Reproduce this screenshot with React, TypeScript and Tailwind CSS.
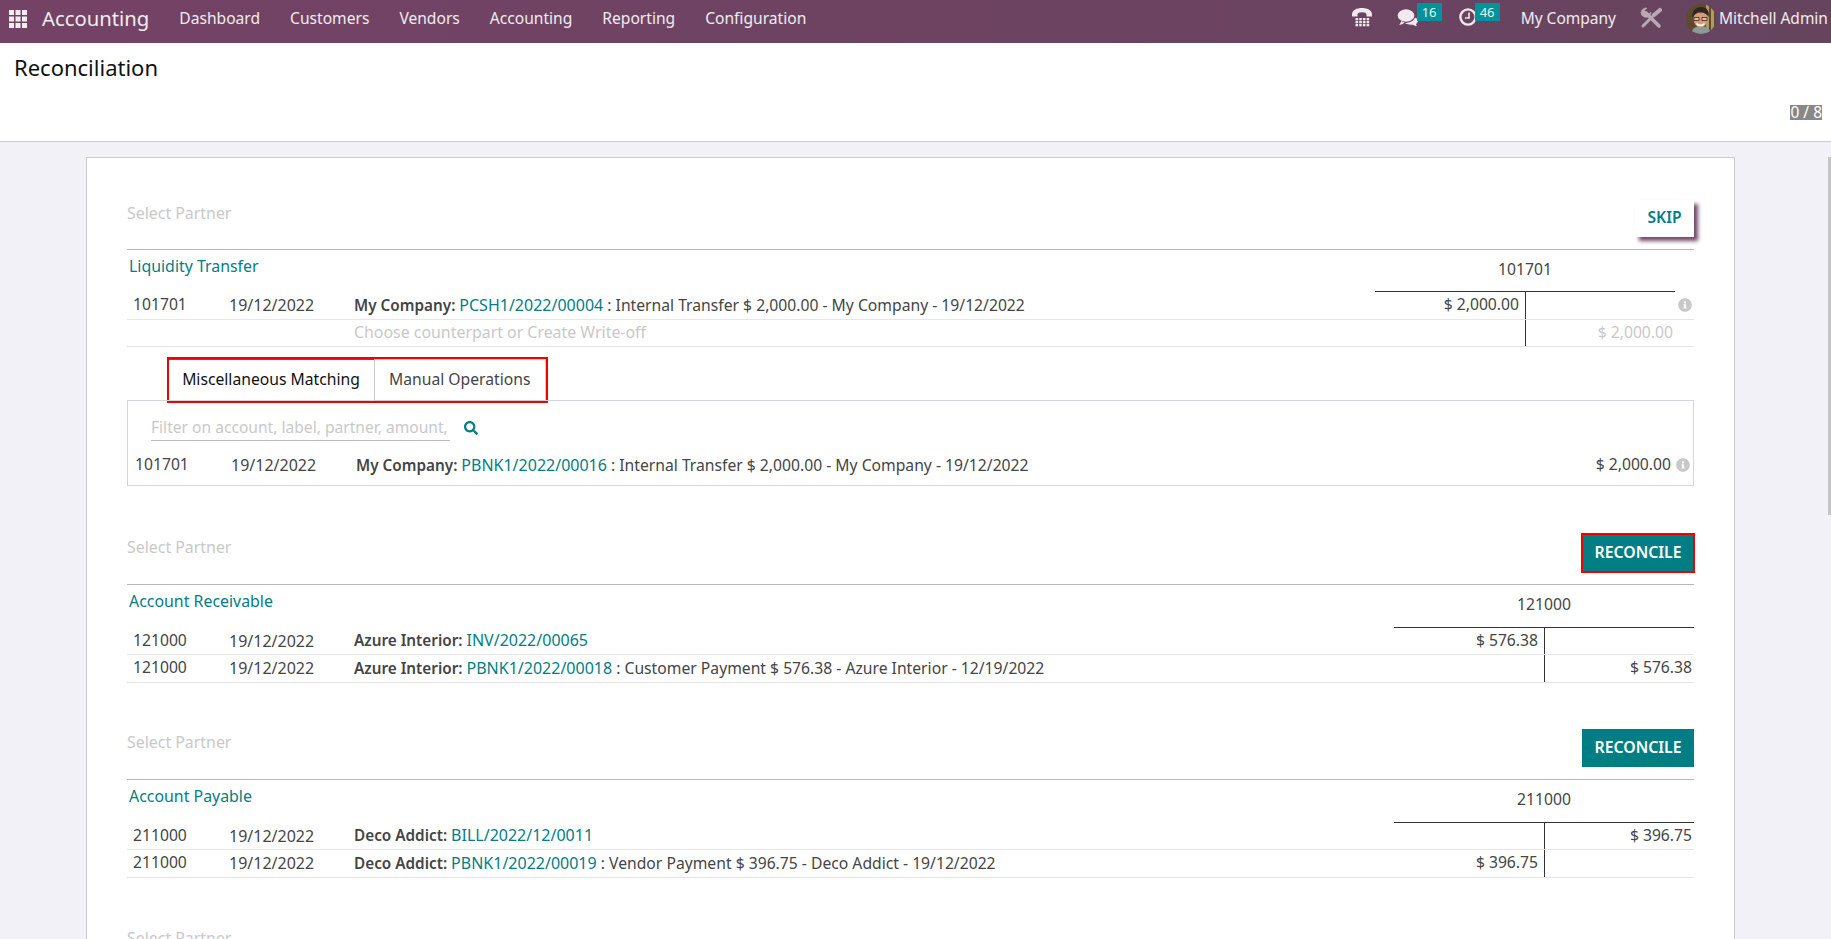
import { FaInfoCircle, FaSearch } from 'react-icons/fa';

const teal = 'text-[#017e84]';

function AppsIcon() {
  return (
    <svg width="18" height="18" viewBox="0 0 18 18" className="fill-[#f4eef2]">
      {[0, 6.5, 13].map((y) =>
        [0, 6.5, 13].map((x) => <rect key={`${x}-${y}`} x={x} y={y} width="5" height="5" />),
      )}
    </svg>
  );
}

function PhoneIcon() {
  return (
    <svg width="20" height="20" viewBox="0 0 20 20" className="fill-[#f1e9ef]">
      <path d="M0 7.500C0 3 5 1 10 1s10 2 10 6.500V9.500h-5.500V7.200C14.500 6 12.500 5.200 10 5.200S5.500 6 5.500 7.200V9.500H0z" />
      {[11, 14, 17].map((y) =>
        [3.500, 7.200, 10.900, 14.600].map((x) => <rect key={`${x}-${y}`} x={x} y={y} width="2.600" height="2.300" />),
      )}
    </svg>
  );
}

function CommentsIcon() {
  return (
    <svg width="21" height="18" viewBox="0 0 21 18" className="fill-[#f1e9ef]">
      <path d="M7 14c1-3 4-5 7-5 4 0 7 1 7 4 0 1-.8 2-2 3 0 .8.4 1.400 1 2-1.500 0-3-.5-4-1.300-4 .3-7.500-.7-9-2.700z" />
      <ellipse cx="9" cy="7.500" rx="9" ry="6.800" stroke="#67445f" strokeWidth="1.200" />
      <path d="M4 13c0 1.500-.8 2.800-2 3.800 2.200 0 4-.8 5.500-2.300z" />
    </svg>
  );
}

function ClockIcon() {
  return (
    <svg width="18" height="18" viewBox="0 0 18 18" fill="none" stroke="#f1e9ef">
      <circle cx="9" cy="9" r="7.600" strokeWidth="2.400" />
      <path d="M10 4.500V10H6" strokeWidth="1.600" />
    </svg>
  );
}

function ToolsIcon() {
  return (
    <svg width="22" height="22" viewBox="0 0 22 22" fill="none" stroke="#b9a8b5" strokeLinecap="round">
      <path d="M6 6l13 13" strokeWidth="3.600" />
      <path d="M1 5.500A5 5 0 0 1 7 1L4.500 3.800l1 2.700 2.700 1L11 5a5 5 0 0 1-5 5.500A5 5 0 0 1 1 5.500z" fill="#b9a8b5" strokeWidth="0.500" />
      <path d="M12 10l-9 9" strokeWidth="3" />
      <path d="M14 8l6-5" strokeWidth="4.200" />
    </svg>
  );
}

function Avatar() {
  return (
    <svg width="30" height="30" viewBox="0 0 30 30" className="rounded-full">
      <rect width="30" height="30" fill="#5e4a30" />
      <path d="M20 0h3v30h-3zM25 0h3v30h-3z" fill="#b39a5e" />
      <path d="M5 30c1-6 5-8 10-8s9 2 10 8z" fill="#8a9a98" />
      <ellipse cx="14.500" cy="15" rx="7" ry="8.500" fill="#d39c7b" />
      <path d="M6.500 14c-1-7 3-11 8.500-11s9 4 7.500 10c-1.500-3-4-4.500-8-4.500s-6.500 2-8 5.500z" fill="#33261e" />
      <path d="M8 13.500h5v3H8zM16 13.500h5v3h-5z" fill="#e0bfa8" stroke="#3a2a20" strokeWidth="0.800" />
      <path d="M10.500 19.500c2 2.500 6 2.500 8 0" stroke="#fff" strokeWidth="1.600" fill="none" />
    </svg>
  );
}

function Navbar() {
  const menus = ['Dashboard', 'Customers', 'Vendors', 'Accounting', 'Reporting', 'Configuration'];
  return (
    <header className="flex h-[43px] shrink-0 items-center bg-gradient-to-r from-[#744265] to-[#66445e] pb-[6px] text-white/90">
      <div className="ml-[9px] mr-[30px] flex items-center gap-[15px]">
        <AppsIcon />
        <span className="text-[20.3px]">Accounting</span>
      </div>
      <nav className="flex gap-[30px] text-[15.6px]">
        {menus.map((m) => (
          <span key={m}>{m}</span>
        ))}
      </nav>
      <div className="ml-auto flex items-center whitespace-nowrap text-[15.5px]">
        <div className="mb-[3px] mr-[25px] flex">
          <PhoneIcon />
        </div>
        <div className="relative mb-[3px] mr-[41px] flex">
          <CommentsIcon />
          <span className="absolute -top-[5px] left-[20px] bg-[#00939b] px-[5px] text-[13px] leading-[18px]">16</span>
        </div>
        <div className="relative mb-[3px] mr-[44px] flex">
          <ClockIcon />
          <span className="absolute -top-[5px] left-[16px] bg-[#00939b] px-[5px] text-[13px] leading-[18px]">46</span>
        </div>
        <span className="mr-[24px]">My Company</span>
        <div className="mb-[2px] mr-[24px] flex">
          <ToolsIcon />
        </div>
        <Avatar />
        <span className="ml-[3px] w-[112px] overflow-hidden">Mitchell Admin</span>
      </div>
    </header>
  );
}

function Ref({ partner, link, rest }: { partner: string; link: string; rest?: string }) {
  return (
    <span>
      <span className="text-[15.3px] font-semibold text-[#444444]">{partner}: </span>
      <span className={`text-[16px] ${teal}`}>{link}</span>
      {rest && <span> : {rest}</span>}
    </span>
  );
}

function MoveRow({
  code,
  partner,
  link,
  rest,
  debit,
  credit,
}: {
  code: string;
  partner: string;
  link: string;
  rest?: string;
  debit?: string;
  credit?: string;
}) {
  return (
    <div className="flex h-[27.5px] items-center border-b border-[#e6e6e6] text-[#454545]">
      <span className="ml-[6px] w-[96px]">{code}</span>
      <span className="w-[125px] text-[16px]">19/12/2022</span>
      <Ref partner={partner} link={link} rest={rest} />
      <div className="ml-auto flex h-full w-[300px]">
        <span className="flex w-[150px] items-center justify-end pr-[6px]">{debit}</span>
        <span className="flex w-[150px] items-center justify-end border-l border-[#333333] pr-[2px]">{credit}</span>
      </div>
    </div>
  );
}

function SectionHead({ button, outlined }: { button?: 'skip' | 'reconcile'; outlined?: boolean }) {
  return (
    <div className={`flex items-start justify-between border-b border-[#b8b8b8] ${button === 'skip' ? 'h-[49.5px]' : 'h-[51px]'}`}>
      <span className="mt-[2px] text-[15.9px] text-[#c9c9c9]">Select Partner</span>
      {button === 'skip' && (
        <span className={`flex h-[37px] w-[59px] items-center justify-center bg-white pb-[1px] text-[15.6px] font-semibold shadow-[4px_4px_4px_#714b67] ${teal}`}>
          SKIP
        </span>
      )}
      {button === 'reconcile' && (
        <span
          className={`flex h-[38px] w-[112px] items-center justify-center bg-[#017e84] text-[15.8px] font-semibold text-white ${
            outlined ? 'outline-2 -outline-offset-1 outline-[#f00000]' : ''
          }`}
        >
          RECONCILE
        </span>
      )}
    </div>
  );
}

function AccountHead({ title, code, heightClass }: { title: string; code: string; heightClass: string }) {
  return (
    <div className={`flex ${heightClass}`}>
      <span className={`ml-[2px] mt-[5px] text-[15.9px] ${teal}`}>{title}</span>
      <div className="ml-auto w-[300px] border-b border-[#333333] pt-[8px] text-center text-[#454545]">{code}</div>
    </div>
  );
}

function MatchingPanel() {
  return (
    <div className="mb-[48px]">
      <div className="ml-[39.5px] mt-[9.5px] flex h-[46px] w-[381.5px] border-2 border-[#f00000] text-[#454545]">
        <span className="flex w-[205px] items-center justify-center border-t border-[#714b67] text-[#111111]">
          Miscellaneous Matching
        </span>
        <span className="flex flex-1 items-center justify-center border border-[#cccccc]">Manual Operations</span>
      </div>
      <div className="-mt-[3px] h-[86px] border border-[#d5d5dd] pt-[15px]">
        <div className="flex items-center">
          <span className="ml-[23px] w-[299px] overflow-hidden whitespace-nowrap border-b border-[#bbbbbb] pb-[1px] text-[15.6px] text-[#c9c9c9]">
            Filter on account, label, partner, amount,
          </span>
          <FaSearch className={`ml-[14px] size-[14px] ${teal}`} />
        </div>
        <div className="mt-[12px] flex items-center pr-[3px] text-[#454545]">
          <span className="ml-[7px] w-[96px]">101701</span>
          <span className="w-[125px] text-[16px]">19/12/2022</span>
          <Ref partner="My Company" link="PBNK1/2022/00016" rest="Internal Transfer $ 2,000.00 - My Company - 19/12/2022" />
          <span className="ml-auto">$ 2,000.00</span>
          <FaInfoCircle className="ml-[5px] size-[14px] text-[#c8c8c8]" />
        </div>
      </div>
    </div>
  );
}

export default function App() {
  return (
    <div className="flex h-screen flex-col overflow-hidden bg-[#f1f1f7] font-['Noto_Sans',sans-serif] text-[15.7px]">
      <Navbar />
      <div className="h-[99px] shrink-0 border-b border-[#cccccc] bg-white">
        <div className="flex justify-between">
          <h1 className="ml-[14px] mt-[8px] text-[22px] text-[#111111]">Reconciliation</h1>
          <span className="mr-[9px] mt-[62px] h-[15px] self-start bg-[#888888] text-[15.5px] leading-[15px] text-white">0 / 8</span>
        </div>
      </div>
      <main className="relative flex-1 overflow-hidden pl-[86px] pt-[15px]">
        <div className="absolute right-0 top-[15px] h-[358px] w-[3px] bg-[#c4c4c4]" />
        <div className="w-[1649px] border border-[#cccccc] bg-white px-[40px] pt-[42px]">
          <SectionHead button="skip" />
          <div className="flex h-[42.5px]">
            <span className={`ml-[2px] mt-[5px] text-[15.9px] ${teal}`}>Liquidity Transfer</span>
            <div className="ml-auto mr-[19px] w-[300px] border-b border-[#333333] pt-[8px] text-center text-[#454545]">101701</div>
          </div>
          <div className="flex h-[27.5px] items-center border-b border-[#e6e6e6] text-[#454545]">
            <span className="ml-[6px] w-[96px]">101701</span>
            <span className="w-[125px] text-[16px]">19/12/2022</span>
            <Ref partner="My Company" link="PCSH1/2022/00004" rest="Internal Transfer $ 2,000.00 - My Company - 19/12/2022" />
            <div className="ml-auto flex h-full">
              <span className="flex w-[150px] items-center justify-end pr-[6px]">$ 2,000.00</span>
              <span className="flex w-[169px] items-center justify-end border-l border-[#333333] pr-[2px]">
                <FaInfoCircle className="size-[14px] text-[#c8c8c8]" />
              </span>
            </div>
          </div>
          <div className="flex h-[27.5px] items-center border-b border-[#e6e6e6] text-[#c9c9c9]">
            <span className="ml-[227px] text-[15.9px]">Choose counterpart or Create Write-off</span>
            <div className="ml-auto flex h-full">
              <span className="w-[150px]" />
              <span className="flex w-[169px] items-center justify-end border-l border-[#333333] pr-[21px]">$ 2,000.00</span>
            </div>
          </div>
          <MatchingPanel />
          <SectionHead button="reconcile" outlined />
          <AccountHead title="Account Receivable" code="121000" heightClass="h-[43px]" />
          <MoveRow code="121000" partner="Azure Interior" link="INV/2022/00065" debit="$ 576.38" />
          <MoveRow code="121000" partner="Azure Interior" link="PBNK1/2022/00018" rest="Customer Payment $ 576.38 - Azure Interior - 12/19/2022" credit="$ 576.38" />
          <div className="h-[46.5px]" />
          <SectionHead button="reconcile" />
          <AccountHead title="Account Payable" code="211000" heightClass="h-[42.5px]" />
          <MoveRow code="211000" partner="Deco Addict" link="BILL/2022/12/0011" credit="$ 396.75" />
          <MoveRow code="211000" partner="Deco Addict" link="PBNK1/2022/00019" rest="Vendor Payment $ 396.75 - Deco Addict - 19/12/2022" debit="$ 396.75" />
          <div className="h-[47px]" />
          <SectionHead />
        </div>
      </main>
    </div>
  );
}
